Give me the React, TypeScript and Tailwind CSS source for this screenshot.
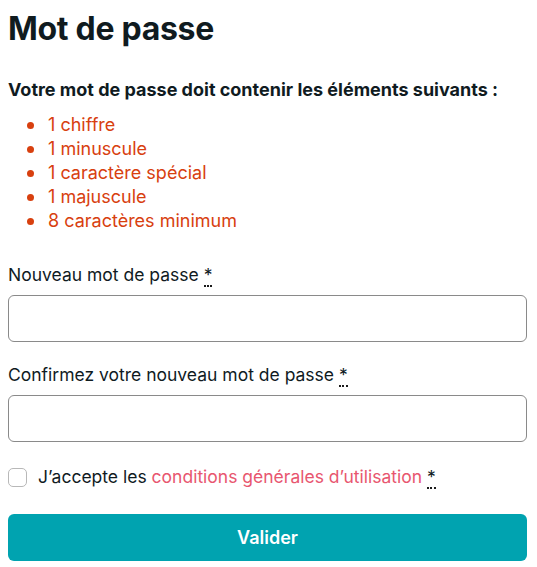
import React from "react";

const Required = () => (
  <abbr title="obligatoire" className="no-underline border-b-2 border-dotted border-[#1b1b1b] leading-none">
    *
  </abbr>
);

const rules = [
  "1 chiffre",
  "1 minuscule",
  "1 caractère spécial",
  "1 majuscule",
  "8 caractères minimum",
];

export default function App() {
  return (
    <div className="min-h-[567px] bg-white pl-2 pr-[10px] pt-[10px] text-[#101b1f] font-['Inter',sans-serif]">
      <h1 className="text-[32px] font-bold leading-[38px] tracking-[-0.3px]">Mot de passe</h1>

      <p className="mt-[30px] text-[18px] font-bold leading-6">
        Votre mot de passe doit contenir les éléments suivants :
      </p>
      <ul className="mt-[11px] pl-[19px] text-[18px] leading-6 text-[#d8400f]">
        {rules.map((r) => (
          <li key={r} className="flex items-center gap-[14px]">
            <span className="w-[7px] h-[7px] rounded-full bg-[#d8400f]" />
            <span>{r}</span>
          </li>
        ))}
      </ul>

      <div className="mt-[30px]">
        <label className="block text-[17.5px] leading-6">
          Nouveau mot de passe <Required />
        </label>
        <input
          type="password"
          className="mt-2 block w-full h-[47px] rounded-md border border-[#8a8a8a] bg-white px-3"
        />
      </div>

      <div className="mt-[21px]">
        <label className="block text-[17.5px] leading-6">
          Confirmez votre nouveau mot de passe <Required />
        </label>
        <input
          type="password"
          className="mt-2 block w-full h-[47px] rounded-md border border-[#8a8a8a] bg-white px-3"
        />
      </div>

      <label className="mt-[23px] flex items-center gap-[11px] text-[17.5px] leading-6">
        <span className="w-[19px] h-[19px] rounded-[5px] border border-[#b8b8b8] bg-white" />
        <span>
          J’accepte les <span className="text-[#e8566f]">conditions générales d’utilisation</span> <Required />
        </span>
      </label>

      <button className="mt-[25px] w-full h-[47px] rounded-md bg-[#00a3b0] text-white text-[18px] font-semibold">
        Valider
      </button>
    </div>
  );
}
